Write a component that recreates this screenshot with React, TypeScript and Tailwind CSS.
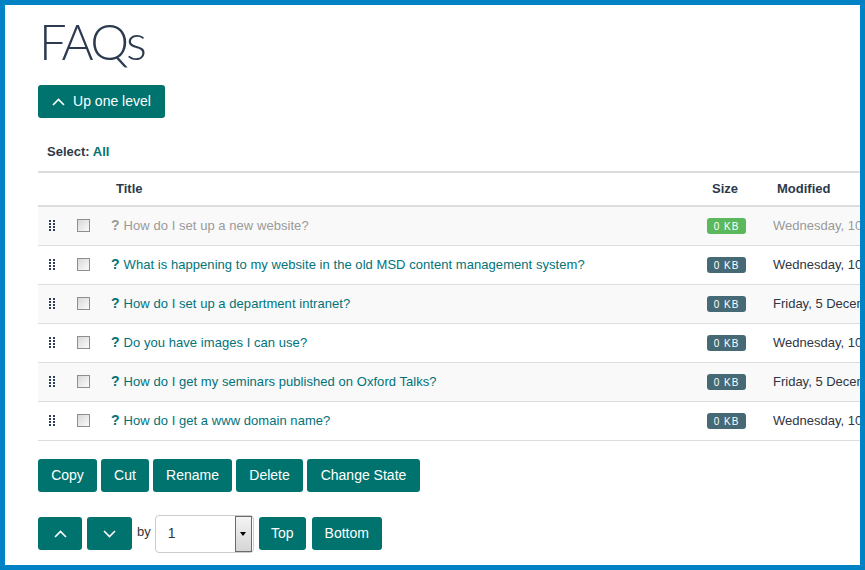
import React from "react";

type Row = { title: string; modified: string; draft?: boolean };

const rows: Row[] = [
  { title: "How do I set up a new website?", modified: "Wednesday, 10 December 2014", draft: true },
  { title: "What is happening to my website in the old MSD content management system?", modified: "Wednesday, 10 December 2014" },
  { title: "How do I set up a department intranet?", modified: "Friday, 5 December 2014" },
  { title: "Do you have images I can use?", modified: "Wednesday, 10 December 2014" },
  { title: "How do I get my seminars published on Oxford Talks?", modified: "Friday, 5 December 2014" },
  { title: "How do I get a www domain name?", modified: "Wednesday, 10 December 2014" },
];

const Chevron = ({ up }: { up?: boolean }) => (
  <svg width="13" height="8" viewBox="0 0 13 8" fill="none" stroke="currentColor" strokeWidth="1.6">
    {up ? <polyline points="1,7 6.5,1.5 12,7" /> : <polyline points="1,1 6.5,6.5 12,1" />}
  </svg>
);

const Handle = () => (
  <div className="grid grid-cols-2 gap-x-[2px] gap-y-[1px] w-[6px]">
    {Array.from({ length: 8 }).map((_, i) => (
      <span key={i} className="w-[2px] h-[2px] bg-[#2d3f5c]" />
    ))}
  </div>
);

const Checkbox = () => (
  <div className="w-[13px] h-[13px] border border-[#8e8e8e] bg-gradient-to-br from-[#d8d8d8] to-[#fbfbfb]" />
);

const Btn = ({ children, className = "" }: { children: React.ReactNode; className?: string }) => (
  <button className={`h-[33px] rounded-[3px] bg-[#00736f] text-white text-[14px] flex items-center justify-center ${className}`}>
    {children}
  </button>
);

export default function App() {
  return (
    <div
      className="w-[865px] h-[570px] border-[5px] border-[#0082c4] bg-white overflow-hidden"
      style={{ fontFamily: '"Liberation Sans", Arial, sans-serif' }}
    >
      <div className="pl-[33px] w-[1000px]">
        <h1
          className="text-[49px] h-[50px] leading-[50px] font-light text-[#2c3b4f] mt-[11px] pl-[1px] tracking-[-2.5px]"
          style={{ fontFamily: 'Lato, "Open Sans", sans-serif' }}
        >
          FAQs
        </h1>
        <Btn className="mt-[19px] w-[127px] gap-[8px]">
          <Chevron up />
          <span>Up one level</span>
        </Btn>
        <div className="mt-[24px] pl-[9px] text-[13px] font-bold text-[#2f3a4a]">
          Select: <span className="text-[#00736f]">All</span>
        </div>

        <div className="mt-[9px] w-[960px] text-[13px]">
          <div className="grid grid-cols-[26px_40px_596px_65px_233px] h-[36px] items-center border-t-2 border-b-2 border-[#dddddd] font-bold text-[#2b3a4b]">
            <div />
            <div />
            <div className="pl-[12px]">Title</div>
            <div className="pl-[12px]">Size</div>
            <div className="pl-[12px]">Modified</div>
          </div>
          {rows.map((r, i) => (
            <div
              key={i}
              className={`grid grid-cols-[26px_40px_596px_65px_233px] h-[39px] items-center border-b border-[#dddddd] ${
                i % 2 === 0 ? "bg-[#f9f9f9]" : "bg-white"
              }`}
            >
              <div className="flex justify-center pl-[1px]">
                <Handle />
              </div>
              <div className="flex justify-center pr-[1px]">
                <Checkbox />
              </div>
              <div
                className={`pl-[7px] whitespace-nowrap tracking-[0.05px] ${
                  r.draft ? "text-[#9a9a9a]" : "text-[#00737a]"
                }`}
              >
                <span className="font-bold text-[14px] mr-[4px]">?</span>
                {r.title}
              </div>
              <div className="pl-[7px]">
                <span
                  className={`inline-flex items-center justify-center w-[39px] h-[16px] rounded-[3px] text-white text-[10px] tracking-[1px] ${
                    r.draft ? "bg-[#5cb85c]" : "bg-[#456a76]"
                  }`}
                >
                  0 KB
                </span>
              </div>
              <div className={`pl-[8px] whitespace-nowrap ${r.draft ? "text-[#9a9a9a]" : "text-[#2f3542]"}`}>
                {r.modified}
              </div>
            </div>
          ))}
        </div>

        <div className="mt-[18px] flex gap-[4px]">
          <Btn className="w-[59px]">Copy</Btn>
          <Btn className="w-[48px]">Cut</Btn>
          <Btn className="w-[79px]">Rename</Btn>
          <Btn className="w-[67px]">Delete</Btn>
          <Btn className="w-[113px]">Change State</Btn>
        </div>

        <div className="mt-[23px] flex items-center">
          <Btn className="w-[44px]">
            <Chevron up />
          </Btn>
          <Btn className="w-[45px] ml-[5px]">
            <Chevron />
          </Btn>
          <span className="ml-[5px] text-[13px] text-[#333] self-start mt-[7px]">by</span>
          <div className="ml-[4px] w-[99px] h-[38px] border border-[#cccccc] rounded-[4px] bg-white flex items-center pr-[1px]">
            <span className="pl-[12px] flex-1 text-[14px] text-[#333]">1</span>
            <div className="w-[17px] h-[36px] border border-[#6b6b6b] bg-gradient-to-b from-[#f4f4f4] to-[#d6d6d6] flex items-center justify-center">
              <span className="w-0 h-0 border-l-[3px] border-r-[3px] border-t-[4px] border-l-transparent border-r-transparent border-t-black" />
            </div>
          </div>
          <Btn className="w-[47px] ml-[5px]">Top</Btn>
          <Btn className="w-[70px] ml-[6px]">Bottom</Btn>
        </div>
      </div>
    </div>
  );
}
